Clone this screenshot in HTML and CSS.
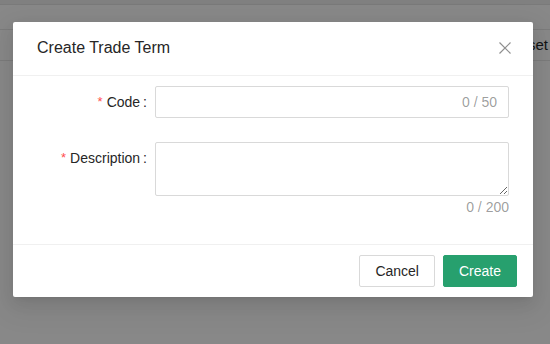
FILE: index.html
```html
<!DOCTYPE html>
<html lang="en">
<head>
<meta charset="utf-8">
<title>Create Trade Term</title>
<link rel="stylesheet" href="styles.css">
</head>
<body>
<div class="page">
  <div class="topbar"></div>
  <div class="row row-1"></div>
  <div class="row row-2"><span class="reset">Reset</span></div>
</div>

<div class="modal" role="dialog">
  <div class="modal-header">
    <div class="modal-title">Create Trade Term</div>
    <button class="modal-close" aria-label="Close">
      <svg width="12" height="12" viewBox="0 0 12 12"><path d="M0.5 0.5 L11.5 11.5 M11.5 0.5 L0.5 11.5" stroke="#8f8f8f" stroke-width="1.2" fill="none"/></svg>
    </button>
  </div>
  <div class="modal-body">
    <div class="form-item">
      <div class="form-label"><span class="req">*</span><span class="label-text">Code</span><span class="colon">:</span></div>
      <div class="form-control">
        <div class="input-box">
          <input class="input" type="text">
          <span class="count">0 / 50</span>
        </div>
      </div>
    </div>
    <div class="form-item form-item-area">
      <div class="form-label"><span class="req">*</span><span class="label-text">Description</span><span class="colon">:</span></div>
      <div class="form-control">
        <textarea class="textarea"></textarea>
        <div class="area-count">0 / 200</div>
      </div>
    </div>
  </div>
  <div class="modal-footer">
    <button class="btn btn-default">Cancel</button>
    <button class="btn btn-primary">Create</button>
  </div>
</div>
</body>
</html>
```

FILE: styles.css
```css
* { box-sizing: border-box; }

html, body {
  margin: 0;
  padding: 0;
}

body {
  width: 550px;
  height: 344px;
  overflow: hidden;
  background: #888888;
  font-family: "Liberation Sans", Arial, sans-serif;
  font-size: 14px;
  color: #262626;
  position: relative;
}

.page {
  width: 550px;
}

.topbar {
  height: 4px;
  background: #808080;
  border-bottom: 1px solid #7a7a7a;
  height: 5px;
}

.row {
  border-bottom: 1px solid #7b7b7b;
}

.row-1 { height: 25px; }

.row-2 {
  height: 31px;
  display: flex;
  justify-content: flex-end;
  align-items: flex-start;
  padding-top: 7px;
  padding-right: 2px;
}

.reset {
  font-size: 15px;
  line-height: 16px;
  color: #141414;
}

.modal {
  position: absolute;
  left: 13px;
  top: 22px;
  width: 520px;
  background: #fff;
  border-radius: 2px;
  box-shadow: 0 3px 6px -4px rgba(0,0,0,.12), 0 6px 16px 0 rgba(0,0,0,.08), 0 9px 28px 8px rgba(0,0,0,.05);
}

.modal-header {
  position: relative;
  padding: 15px 24px 16px;
  border-bottom: 1px solid #f0f0f0;
  border-radius: 2px 2px 0 0;
}

.modal-title {
  font-size: 16px;
  line-height: 22px;
  color: #262626;
}

.modal-close {
  position: absolute;
  top: 20px;
  right: 22px;
  width: 12px;
  height: 12px;
  padding: 0;
  border: 0;
  background: transparent;
  display: block;
}

.modal-close svg { display: block; }

.modal-body {
  padding: 10px 24px 2px;
}

.form-item {
  display: flex;
  margin-bottom: 24px;
}

.form-label {
  width: 25%;
  flex: none;
  text-align: right;
  height: 32px;
  line-height: 32px;
  color: #262626;
  white-space: nowrap;
}

.req {
  color: #ff4d4f;
  margin-right: 4px;
  font-size: 13px;
  position: relative;
  top: -1px;
}

.colon {
  margin: 0 8px 0 3px;
}

.form-control {
  flex: 1;
  min-width: 0;
}

.input-box {
  display: flex;
  align-items: center;
  height: 32px;
  border: 1px solid #d9d9d9;
  border-radius: 2px;
  padding: 4px 11px;
  background: #fff;
}

.input {
  flex: 1;
  min-width: 0;
  border: 0;
  outline: 0;
  padding: 0;
  font: inherit;
  background: transparent;
}

.count {
  color: rgba(0,0,0,.4);
  margin-left: 4px;
}

.textarea {
  display: block;
  width: 100%;
  height: 54px;
  border: 1px solid #d9d9d9;
  border-radius: 2px;
  padding: 4px 11px;
  font: inherit;
  resize: vertical;
  outline: 0;
  margin: 0;
}

.area-count {
  text-align: right;
  line-height: 22px;
  color: rgba(0,0,0,.4);
}

.modal-footer {
  display: flex;
  justify-content: flex-end;
  gap: 8px;
  padding: 10px 16px;
  border-top: 1px solid #f0f0f0;
}

.btn {
  height: 32px;
  padding: 4px 15px;
  font-family: inherit;
  font-size: 14px;
  line-height: 22px;
  border-radius: 2px;
  border: 1px solid #d9d9d9;
  background: #fff;
  color: #262626;
}

.btn-primary {
  background: #27a06e;
  border-color: #27a06e;
  color: #fff;
}
```
